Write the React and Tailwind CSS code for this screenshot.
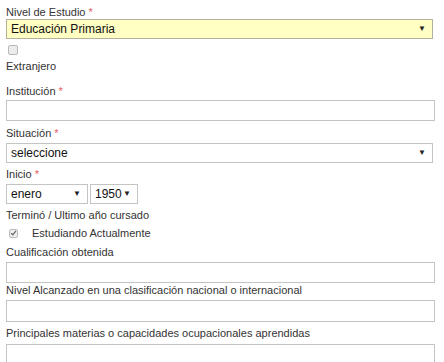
import React from 'react';

function Label({ text, required, className = '' }) {
  return (
    <div className={`text-[11px] leading-[14px] text-[#333] ${className}`}>
      {text}
      {required && <span className="text-[#e06060]"> *</span>}
    </div>
  );
}

function Select({ value, className = '', yellow }) {
  return (
    <div
      className={`flex h-[20px] items-center justify-between border pl-[4px] pr-[6px] text-[12px] text-[#111] ${
        yellow ? 'border-[#b4b29c] bg-[#ffffc4]' : 'border-[#c4c4c4] bg-white'
      } ${className}`}
    >
      <span>{value}</span>
      <span className="text-[8px] text-[#222]">▼</span>
    </div>
  );
}

function Input({ className = '' }) {
  return <div className={`w-[429px] border border-[#c4c4c4] bg-white ${className}`} />;
}

export default function App() {
  return (
    <div className="h-[362px] w-[444px] overflow-hidden bg-white pl-[6px] pt-[5px] font-['Liberation_Sans',Arial,sans-serif]">
      <Label text="Nivel de Estudio" required className="leading-[13px]" />
      <Select value="Educación Primaria" yellow className="w-[427px]" />
      <div className="ml-[2px] mt-[6px] h-[10px] w-[10px] rounded-[2px] border border-[#b8b8b8] bg-[#ececec]" />
      <Label text="Extranjero" className="mt-[4px]" />
      <Label text="Institución" required className="mt-[11px]" />
      <Input className="mt-[2px] h-[21px]" />
      <Label text="Situación" required className="mt-[5px]" />
      <Select value="seleccione" className="mt-[3px] w-[427px]" />
      <Label text="Inicio" required className="mt-[4px]" />
      <div className="mt-[3px] flex gap-[2px]">
        <Select value="enero" className="w-[82px]" />
        <Select value="1950" className="w-[48px]" />
      </div>
      <Label text="Terminó / Ultimo año cursado" className="mt-[4px]" />
      <div className="mt-[4px] flex h-[14px] items-center">
        <div className="ml-[3px] flex h-[9px] w-[9px] items-center justify-center rounded-[2px] border border-[#bbb] bg-[#eee]">
          <svg viewBox="0 0 10 10" className="h-[8px] w-[8px]">
            <path d="M1.5 5.2 L4 7.6 L8.5 2" fill="none" stroke="#666" strokeWidth="1.8" />
          </svg>
        </div>
        <span className="ml-[14px] text-[11px] leading-[14px] text-[#333]">Estudiando Actualmente</span>
      </div>
      <Label text="Cualificación obtenida" className="mt-[5px]" />
      <Input className="mt-[3px] h-[21px]" />
      <Label text="Nivel Alcanzado en una clasificación nacional o internacional" />
      <Input className="mt-[3px] h-[22px]" />
      <Label text="Principales materias o capacidades ocupacionales aprendidas" className="mt-[4px]" />
      <Input className="mt-[4px] h-[22px]" />
    </div>
  );
}
